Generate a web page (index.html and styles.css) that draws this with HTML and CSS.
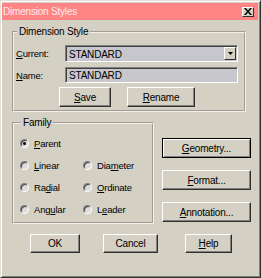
FILE: index.html
```html
<!DOCTYPE html>
<html lang="en">
<head>
    <meta charset="UTF-8">
    <title>Dimension Styles</title>
    <link rel="stylesheet" href="styles.css">
</head>
<body>
    <div class="dialog">
        <div class="titlebar">
            <span class="title">Dimension Styles</span>
            <span class="close">
                <svg width="8" height="7" viewBox="0 0 8 7"><path d="M0 0h2l2 2.5L6 0h2L5 3.5 8 7H6L4 4.5 2 7H0l3-3.5z" fill="#000"/></svg>
            </span>
        </div>

        <div class="content">
            <fieldset class="group style-group">
                <legend>Dimension Style</legend>
                <div class="row">
                    <label><u>C</u>urrent:</label>
                    <div class="combo">
                        <span>STANDARD</span>
                        <span class="drop">
                            <svg width="5" height="3" viewBox="0 0 5 3"><path d="M0 0h5L2.5 3z" fill="#000"/></svg>
                        </span>
                    </div>
                </div>
                <div class="row">
                    <label><u>N</u>ame:</label>
                    <div class="field">STANDARD</div>
                </div>
                <div class="btn-row">
                    <button class="btn save"><u>S</u>ave</button>
                    <button class="btn rename"><u>R</u>ename</button>
                </div>
            </fieldset>

            <div class="middle">
                <fieldset class="group family">
                    <legend>Family</legend>
                    <div class="radios">
                        <div class="radio"><span class="dot checked"></span><span><u>P</u>arent</span></div>
                        <div></div>
                        <div class="radio"><span class="dot"></span><span><u>L</u>inear</span></div>
                        <div class="radio"><span class="dot"></span><span>Dia<u>m</u>eter</span></div>
                        <div class="radio"><span class="dot"></span><span>Ra<u>d</u>ial</span></div>
                        <div class="radio"><span class="dot"></span><span><u>O</u>rdinate</span></div>
                        <div class="radio"><span class="dot"></span><span>Ang<u>u</u>lar</span></div>
                        <div class="radio"><span class="dot"></span><span>L<u>e</u>ader</span></div>
                    </div>
                </fieldset>
                <div class="side">
                    <button class="btn wide default"><u>G</u>eometry...</button>
                    <button class="btn wide"><u>F</u>ormat...</button>
                    <button class="btn wide"><u>A</u>nnotation...</button>
                </div>
            </div>

            <div class="footer">
                <button class="btn ok">OK</button>
                <button class="btn cancel">Cancel</button>
                <button class="btn help"><u>H</u>elp</button>
            </div>
        </div>
    </div>
</body>
</html>
```

FILE: styles.css
```css
body {
    margin: 0;
    background: #d4d0c4;
    font-family: 'Liberation Sans', Arial, sans-serif;
    font-size: 9.5px;
    letter-spacing: -0.2px;
    color: #000;
}

.dialog {
    width: 261px;
    height: 278px;
    box-sizing: border-box;
    background: #d4d0c4;
    border: 1px solid;
    border-color: #e4e0d6 #303030 #303030 #e4e0d6;
    box-shadow: inset 1px 1px #fff, inset -1px -1px #808080;
    padding: 2px 2px 0 1px;
}

.titlebar {
    height: 17px;
    background: #ff8484;
    display: flex;
    align-items: center;
    justify-content: space-between;
    padding: 0 4px 0 1px;
}

.title {
    color: #ffecec;
    font-size: 10px;
}

.close {
    width: 12px;
    height: 10px;
    box-sizing: border-box;
    background: #d4d0c4;
    border: 1px solid;
    border-color: #fff #303030 #303030 #fff;
    display: flex;
    align-items: center;
    justify-content: center;
}

.content {
    padding: 6px 0 0 10px;
}

.group {
    margin: 0;
    padding: 0;
    border: 2px groove #f4f0e8;
    box-sizing: border-box;
}

legend {
    padding: 0 2px;
    margin-left: 1px;
    line-height: 12px;
    font-size: 10px;
}

.style-group {
    width: 234px;
    height: 86px;
    padding: 7px 6px 0 2px;
}

.row {
    display: flex;
    align-items: center;
    margin-bottom: 5px;
}

.row label {
    width: 49px;
}

u {
    text-decoration: underline;
    text-underline-offset: 1px;
}

.combo, .field {
    flex: 1;
    height: 17px;
    box-sizing: border-box;
    background: #c6c6cc;
    border: 1px solid;
    border-color: #808080 #fff #fff #808080;
    box-shadow: inset 1px 1px #404040;
    display: flex;
    align-items: center;
    justify-content: space-between;
    padding: 1px 1px 0 3px;
    font-size: 10px;
}

.field {
    height: 16px;
    background: #c8c8cc;
}

.drop {
    width: 12px;
    height: 13px;
    box-sizing: border-box;
    background: #d4d0c4;
    border: 1px solid;
    border-color: #fff #303030 #303030 #fff;
    display: flex;
    align-items: center;
    justify-content: center;
    margin-bottom: 1px;
}

.btn {
    font-family: inherit;
    font-size: 10px;
    letter-spacing: -0.2px;
    color: #000;
    background: #d4d0c4;
    border: 1px solid;
    border-color: #fff #303030 #303030 #fff;
    box-shadow: inset -1px -1px #808080;
    padding: 0;
    height: 20px;
}

.btn-row {
    display: flex;
    gap: 16px;
    padding-left: 43px;
    margin-top: -1px;
}

.save { width: 52px; }
.rename { width: 68px; }

.middle {
    display: flex;
    gap: 8px;
    margin-top: 5px;
}

.family {
    width: 142px;
    height: 107px;
    padding: 3px 0 0 6px;
}

.radios {
    display: grid;
    grid-template-columns: 63px 60px;
    grid-auto-rows: 22px;
}

.radio {
    display: flex;
    align-items: center;
    gap: 5px;
}

.dot {
    width: 9px;
    height: 9px;
    border-radius: 50%;
    box-sizing: border-box;
    background: #dcdcdc;
    border: 1px solid;
    border-color: #808080 #fff #fff #808080;
    box-shadow: inset 1px 1px #404040;
    display: flex;
    align-items: center;
    justify-content: center;
}

.dot.checked::after {
    content: "";
    width: 3px;
    height: 3px;
    border-radius: 50%;
    background: #000;
}

.side {
    display: flex;
    flex-direction: column;
    gap: 12px;
    padding-top: 21px;
}

.wide {
    width: 89px;
}

.default {
    border-color: #000;
    box-shadow: inset 1px 1px #fff, inset -1px -1px #808080;
}

.footer {
    display: flex;
    margin-top: 10px;
    padding-left: 18px;
}

.footer .btn {
    height: 19px;
}

.ok { width: 50px; }
.cancel { width: 55px; margin-left: 23px; }
.help { width: 47px; margin-left: 27px; }
```
